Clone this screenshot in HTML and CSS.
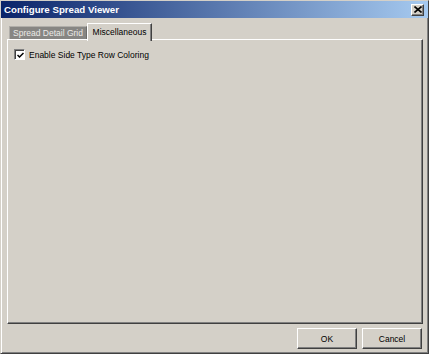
FILE: index.html
```html
<!DOCTYPE html>
<html>
<head>
<meta charset="utf-8">
<link rel="stylesheet" href="styles.css">
</head>
<body>
<div class="window">
  <div class="titlebar">
    <span class="title">Configure Spread Viewer</span>
    <span class="close">
      <svg width="8" height="7" viewBox="0 0 8 7"><path d="M0.5 0.5 L7.5 6.5 M7.5 0.5 L0.5 6.5" stroke="#000" stroke-width="1.6" fill="none"/></svg>
    </span>
  </div>
  <div class="content">
    <div class="tabs">
      <div class="tab">Spread Detail Grid</div>
      <div class="tab active">Miscellaneous</div>
    </div>
    <div class="panel">
      <label class="check">
        <span class="box">
          <svg width="7" height="7" viewBox="0 0 7 7"><path d="M0.5 3 L2.5 5 L6.5 1" stroke="#000" stroke-width="1.5" fill="none"/></svg>
        </span>
        <span class="label">Enable Side Type Row Coloring</span>
      </label>
    </div>
    <div class="buttons">
      <div class="btn">OK</div>
      <div class="btn">Cancel</div>
    </div>
  </div>
</div>
</body>
</html>
```
FILE: styles.css
```css
html, body {
  margin: 0;
  padding: 0;
  background: #d4d0c8;
}
body {
  font-family: "Liberation Sans", Arial, sans-serif;
  font-size: 8.5px;
  color: #000;
}
.window {
  width: 429px;
  height: 354px;
  box-sizing: border-box;
  border-top: 1px solid #d4d0c8;
  border-left: 1px solid #d4d0c8;
  border-right: 1px solid #404040;
  border-bottom: 1px solid #404040;
  box-shadow: inset 1px 1px #fff, inset -1px -1px #808080;
  display: flex;
  flex-direction: column;
  background: #d4d0c8;
}
.titlebar {
  height: 17px;
  flex: none;
  background: linear-gradient(to right, #0a246a, #a6caf0);
  display: flex;
  align-items: center;
  justify-content: space-between;
  padding: 0 4px 0 3px;
}
.title {
  color: #fff;
  font-weight: bold;
  font-size: 9.7px;
}
.close {
  width: 13px;
  height: 12px;
  box-sizing: border-box;
  background: #d4d0c8;
  border: 1px solid;
  border-color: #fff #404040 #404040 #fff;
  box-shadow: inset -1px -1px #808080;
  display: flex;
  align-items: center;
  justify-content: center;
}
.close svg { display: block; }
.content {
  flex: 1;
  display: flex;
  flex-direction: column;
  padding: 5px 5px 0 6px;
}
.tabs {
  display: flex;
  align-items: flex-end;
  height: 17px;
  padding-left: 2px;
}
.tab {
  height: 14px;
  width: 78px;
  box-sizing: border-box;
  background: #878683;
  color: #ecebe8;
  border-top: 1px solid #b0aea9;
  border-left: 1px solid #b0aea9;
  border-right: 1px solid #6e6d6a;
  display: flex;
  align-items: center;
  justify-content: center;
  padding-bottom: 1px;
}
.tab.active {
  position: relative;
  z-index: 1;
  height: 18px;
  width: 65px;
  margin-bottom: -1px;
  background: #d4d0c8;
  color: #000;
  border-top: 1px solid #fff;
  border-left: 1px solid #fff;
  border-right: 1px solid #404040;
  box-shadow: inset -1px 0 #808080;
  padding-bottom: 2px;
}
.panel {
  flex: 1;
  margin-top: -1px;
  border: 1px solid;
  border-color: #fff #404040 #404040 #fff;
  box-shadow: inset -1px -1px #808080;
  padding: 9px 6px;
}
.check {
  display: flex;
  align-items: center;
  gap: 4px;
}
.box {
  width: 11px;
  height: 11px;
  box-sizing: border-box;
  background: #fff;
  border: 1px solid;
  border-color: #808080 #fff #fff #808080;
  box-shadow: inset 1px 1px #404040;
  display: flex;
  align-items: center;
  justify-content: center;
  padding: 1px 0 0 1px;
}
.box svg { display: block; }
.buttons {
  display: flex;
  justify-content: flex-end;
  gap: 5px;
  padding: 4px 1px 4px 0;
}
.btn {
  width: 60px;
  height: 21px;
  box-sizing: border-box;
  border: 1px solid;
  border-color: #fff #404040 #404040 #fff;
  box-shadow: inset -1px -1px #808080;
  background: #d4d0c8;
  display: flex;
  align-items: center;
  justify-content: center;
}
```
